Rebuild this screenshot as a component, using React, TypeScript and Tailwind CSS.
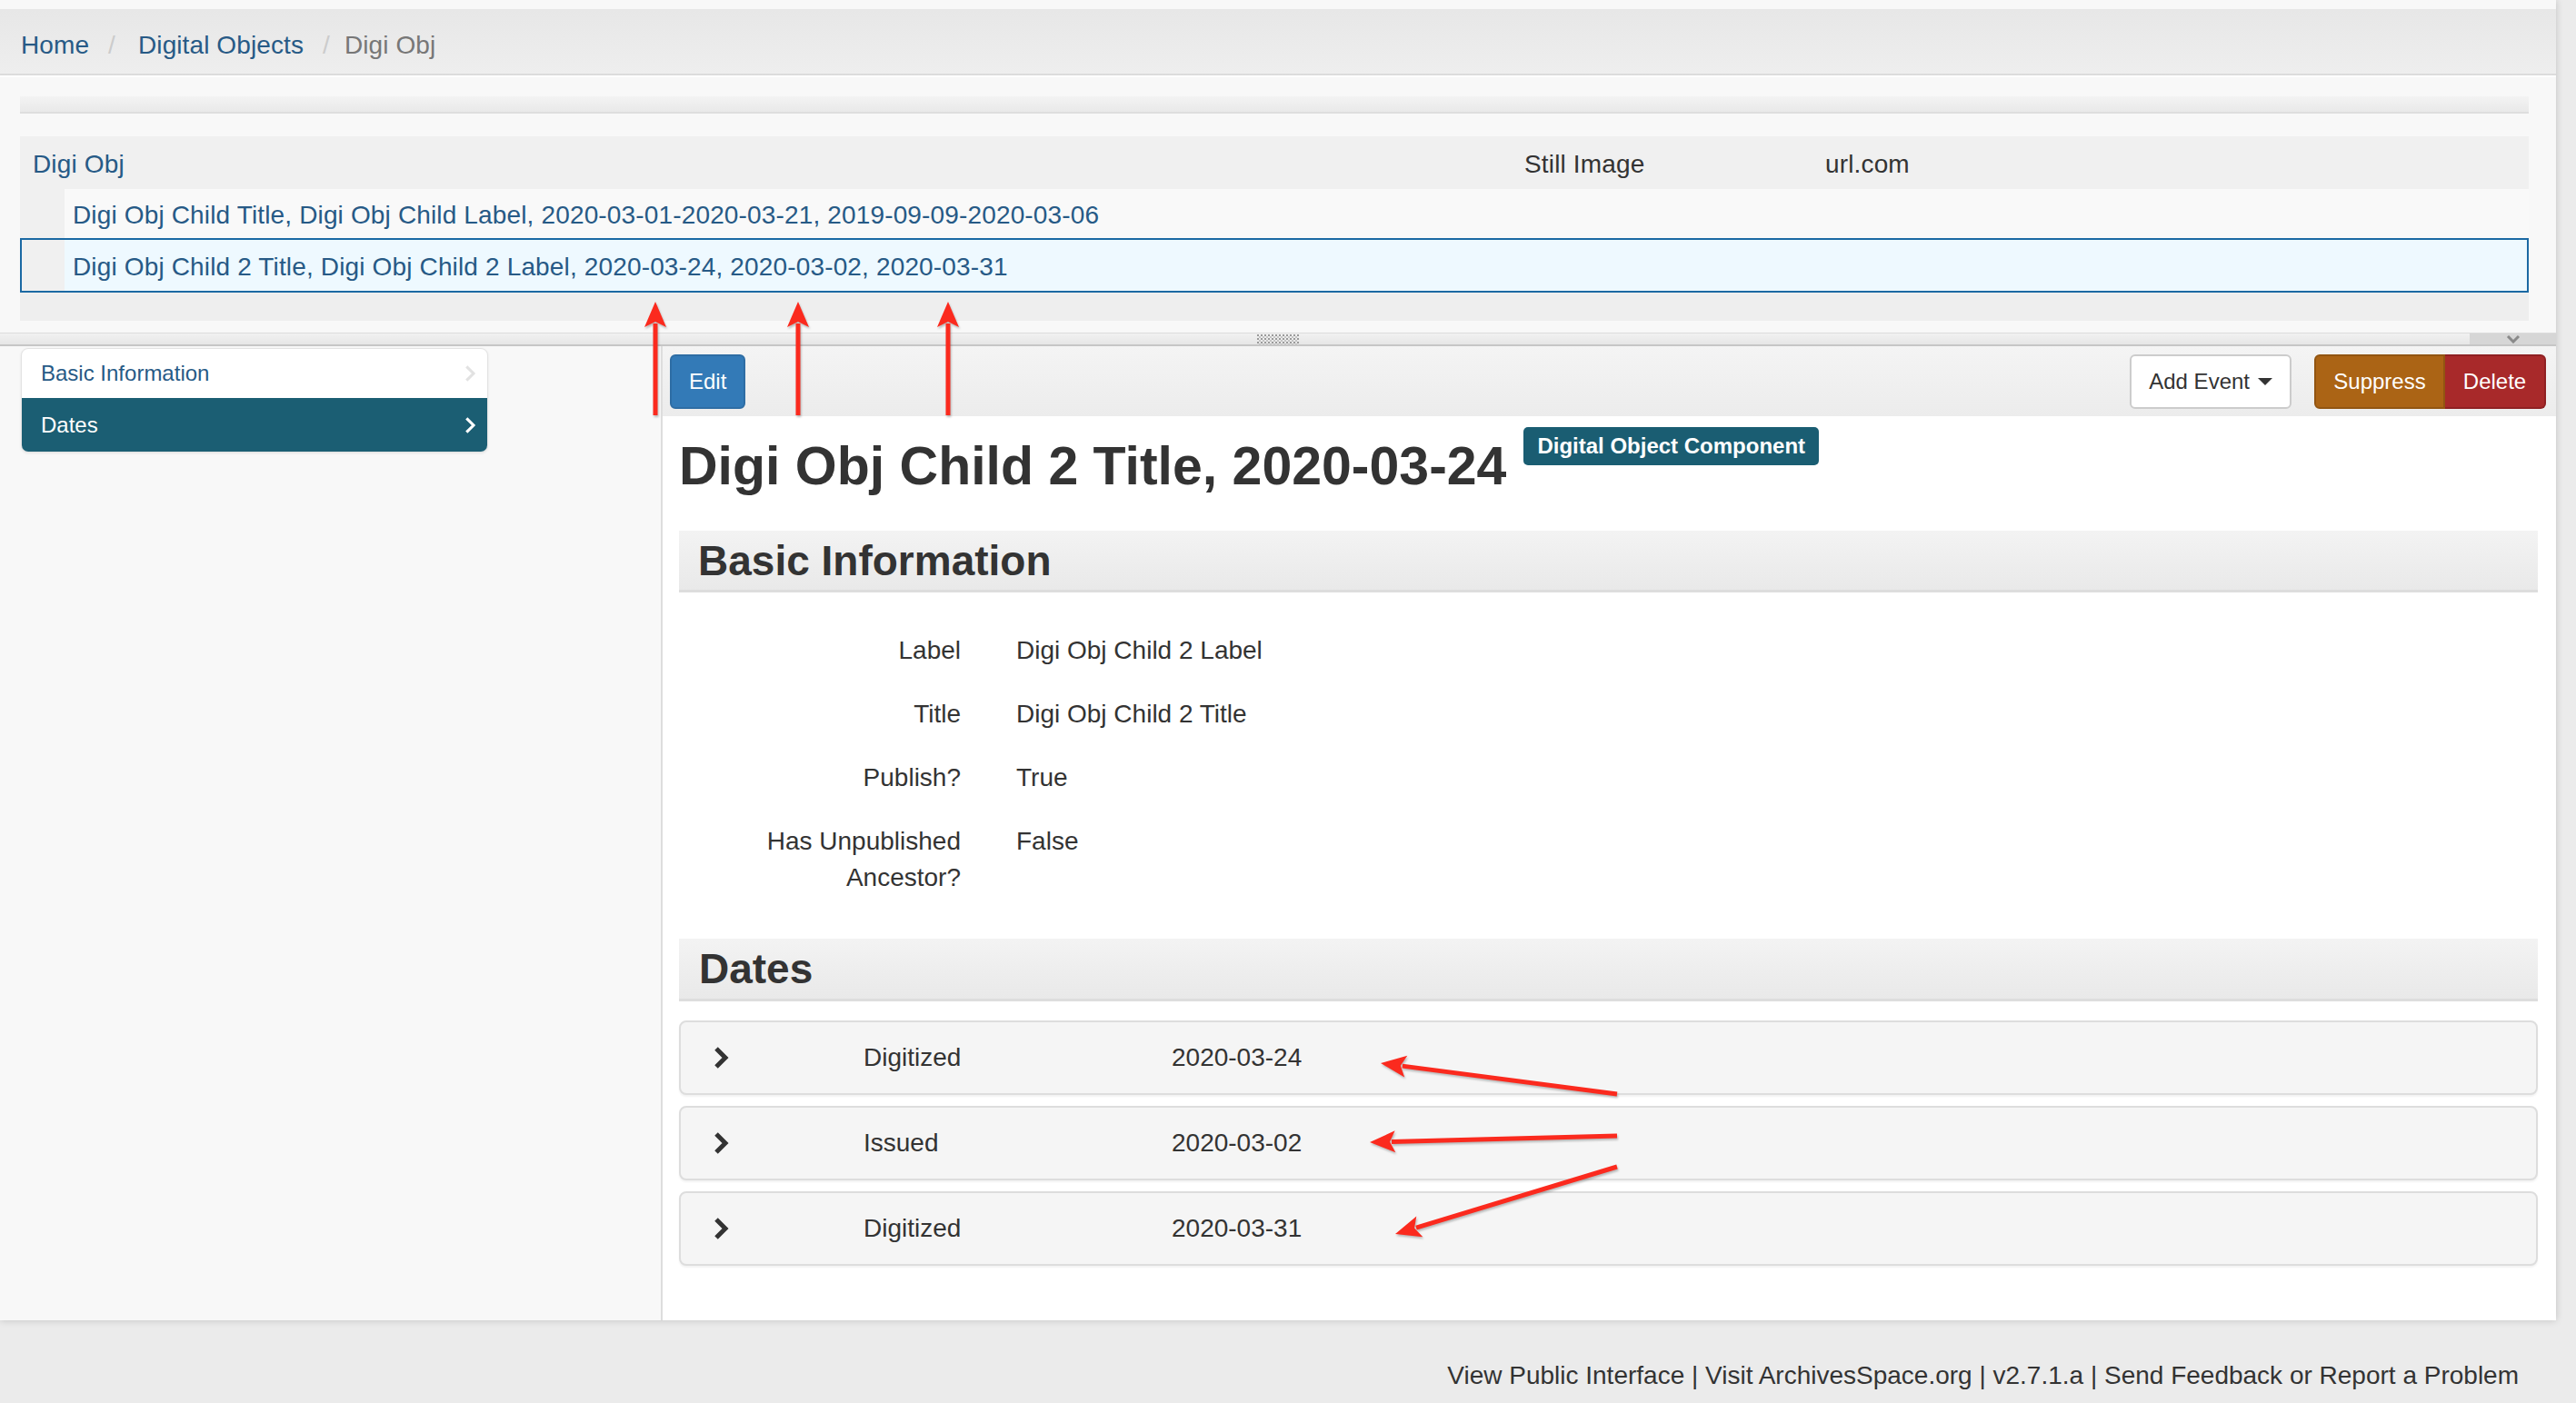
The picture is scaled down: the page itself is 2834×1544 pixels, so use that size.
import React from "react";

const LINK = "text-[#275a86]";

function Chevron({ className, stroke = 5 }: { className?: string; stroke?: number }) {
  return (
    <svg className={className} viewBox="0 0 19 26" fill="none" aria-hidden>
      <polyline
        points="4,3 14,13 4,23"
        stroke="currentColor"
        strokeWidth={stroke}
        strokeLinecap="butt"
        strokeLinejoin="miter"
      />
    </svg>
  );
}

function Arrow({ x1, y1, x2, y2 }: { x1: number; y1: number; x2: number; y2: number }) {
  const len = Math.hypot(x2 - x1, y2 - y1);
  const ux = (x2 - x1) / len;
  const uy = (y2 - y1) / len;
  const nx = -uy;
  const ny = ux;
  const head = 28;
  const half = 12;
  const bx = x2 - ux * head;
  const by = y2 - uy * head;
  const pts = [
    `${x2},${y2}`,
    `${bx + nx * half},${by + ny * half}`,
    `${bx + ux * 6},${by + uy * 6}`,
    `${bx - nx * half},${by - ny * half}`,
  ].join(" ");
  return (
    <g>
      <line x1={x1} y1={y1} x2={bx + ux * 4} y2={by + uy * 4} stroke="#fb2a1e" strokeWidth={5} />
      <polygon points={pts} fill="#fb2a1e" />
    </g>
  );
}

const fields: { label: string; value: string }[] = [
  { label: "Label", value: "Digi Obj Child 2 Label" },
  { label: "Title", value: "Digi Obj Child 2 Title" },
  { label: "Publish?", value: "True" },
  { label: "Has Unpublished Ancestor?", value: "False" },
];

const dates = [
  { type: "Digitized", date: "2020-03-24" },
  { type: "Issued", date: "2020-03-02" },
  { type: "Digitized", date: "2020-03-31" },
];

export default function App() {
  return (
    <div className="relative min-h-[1544px] w-full bg-[#ebebeb] font-['Liberation_Sans',Arial,sans-serif] text-[28px] leading-[40px] text-[#333]">
      <div className="w-[2812px] bg-[#f8f8f8] shadow-[0_0_8px_rgba(0,0,0,0.18)]">
        <div className="h-[10px]" />
        <nav className="flex h-[73px] items-start border-b-2 border-[#dcdcdc] bg-gradient-to-b from-[#e7e7e7] to-[#eeeeee] pl-[23px] pt-[20px] tracking-[0.1px]">
          <span className={LINK}>Home</span>
          <span className="ml-[21px] text-[#cccccc]">/</span>
          <span className={`ml-[25px] ${LINK}`}>Digital Objects</span>
          <span className="ml-[21px] text-[#cccccc]">/</span>
          <span className="ml-[16px] text-[#777777]">Digi Obj</span>
        </nav>

        {/* tree */}
        <div className="border-t-2 border-white pl-[22px] pr-[30px] pt-[21px] tracking-[0.15px]">
          <div className="h-[19px] border-b-2 border-[#dedede] bg-gradient-to-b from-[#f3f3f3] to-[#e9e9e9]" />
          <div className="mt-[25px] bg-[#eeeeee]">
            <div className="flex h-[58px] items-center bg-[#f0f0f0] pl-[14px] pt-[4px]">
              <span className={`w-[1641px] ${LINK}`}>Digi Obj</span>
              <span className="w-[331px]">Still Image</span>
              <span>url.com</span>
            </div>
            <div className="flex h-[54px]">
              <div className="w-[49px] bg-[#f0f0f0]" />
              <div className={`flex flex-1 items-center bg-[#f9f9f9] pl-[9px] pt-[4px] ${LINK}`}>
                Digi Obj Child Title, Digi Obj Child Label, 2020-03-01-2020-03-21, 2019-09-09-2020-03-06
              </div>
            </div>
            <div className="flex h-[60px] border-2 border-[#1b69a3]">
              <div className="w-[47px] bg-[#f0f0f0]" />
              <div className={`flex flex-1 items-center bg-[#eef9ff] pl-[9px] pt-[3px] ${LINK}`}>
                Digi Obj Child 2 Title, Digi Obj Child 2 Label, 2020-03-24, 2020-03-02, 2020-03-31
              </div>
            </div>
            <div className="h-[31px]" />
          </div>
        </div>

        {/* splitter */}
        <div className="mt-[13px] grid h-[15px] grid-cols-[1fr_auto_1fr] border-b-2 border-t border-b-[#c6c6c6] border-t-[#dcdcdc] bg-gradient-to-b from-[#f1f1f1] to-[#e6e6e6]">
          <div />
          <div className="flex items-center">
            <svg width="46" height="11" aria-hidden>
              <defs>
                <pattern id="grip" width="4" height="4" patternUnits="userSpaceOnUse">
                  <rect width="2" height="2" fill="#9a9a9a" />
                  <rect x="2" y="2" width="2" height="2" fill="#c4c4c4" />
                </pattern>
              </defs>
              <rect width="46" height="11" fill="url(#grip)" />
            </svg>
          </div>
          <div className="flex justify-end">
            <div className="flex h-full w-[95px] items-start justify-center bg-[#d6d6d6] pt-[1px]">
              <svg width="16" height="10" viewBox="0 0 16 10" aria-hidden>
                <polyline points="2,2 8,8 14,2" fill="none" stroke="#8a8a8a" strokeWidth={3} />
              </svg>
            </div>
          </div>
        </div>

        <div className="flex">
          {/* sidebar */}
          <aside className="w-[727px] pl-[23px] pt-[2px]">
            <div className="w-[514px] overflow-hidden rounded-[8px] border border-[#e3e3e3] bg-white text-[24px] shadow-[0_1px_3px_rgba(0,0,0,0.08)]">
              <div className={`flex h-[54px] items-center justify-between pl-[21px] pr-[11px] ${LINK}`}>
                <span>Basic Information</span>
                <Chevron className="h-[20px] w-[15px] text-[#e2e2e2]" stroke={4} />
              </div>
              <div className="flex h-[59px] items-center justify-between bg-[#1b5e73] pl-[21px] pr-[11px] text-white">
                <span>Dates</span>
                <Chevron className="h-[20px] w-[15px] text-white" stroke={4} />
              </div>
            </div>
          </aside>

          {/* main record */}
          <section className="flex-1 border-l-2 border-[#dddddd] bg-white pb-[60px]">
            <div className="flex h-[77px] items-center justify-between bg-gradient-to-b from-[#f4f4f4] to-[#ececec] pl-[8px] pr-[11px] text-[24px]">
              <button className="h-[60px] rounded-[6px] border-2 border-[#2e6da4] bg-[#337ab7] px-[19px] text-white">
                Edit
              </button>
              <div className="flex items-center gap-[25px]">
                <button className="flex h-[60px] items-center gap-[9px] rounded-[6px] border-2 border-[#cccccc] bg-white px-[19px] text-[#333]">
                  Add Event
                  <span className="h-0 w-0 border-x-[8px] border-t-[8px] border-x-transparent border-t-[#333]" />
                </button>
                <div className="flex">
                  <button className="h-[60px] w-[144px] rounded-l-[6px] border-2 border-[#925511] bg-[#ab6415] text-white">
                    Suppress
                  </button>
                  <button className="h-[60px] w-[111px] rounded-r-[6px] border-2 border-l-0 border-[#8f2022] bg-[#a8292a] text-white">
                    Delete
                  </button>
                </div>
              </div>
            </div>

            <div className="pl-[18px] pr-[20px]">
              <div className="mt-[12px] flex items-start">
                <h2 className="mt-[11px] text-[59px] font-bold leading-[65px] text-[#333]">
                  Digi Obj Child 2 Title, 2020-03-24
                </h2>
                <span className="ml-[19px] flex h-[42px] items-center rounded-[5px] bg-[#1a5d72] px-[15px] text-[24px] font-bold text-white">
                  Digital Object Component
                </span>
              </div>

              <div className="mt-[38px] flex h-[68px] items-center border-b-[3px] border-[#dddddd] bg-gradient-to-b from-[#f3f3f3] to-[#e9e9e9] pl-[21px]">
                <h3 className="text-[46px] font-bold leading-[56px]">Basic Information</h3>
              </div>

              <div className="flex flex-col gap-[30px] pt-[44px]">
                {fields.map((f) => (
                  <div key={f.label} className="flex">
                    <div className="w-[340px] pl-[31px] pr-[30px] text-right">{f.label}</div>
                    <div className="pl-[31px]">{f.value}</div>
                  </div>
                ))}
              </div>

              <div className="mt-[47px] flex h-[69px] items-center border-b-[3px] border-[#dddddd] bg-gradient-to-b from-[#f3f3f3] to-[#e9e9e9] pl-[22px]">
                <h3 className="text-[46px] font-bold leading-[56px]">Dates</h3>
              </div>

              <div className="mt-[21px] flex flex-col gap-[12px]">
                {dates.map((d, i) => (
                  <div
                    key={i}
                    className="flex h-[82px] items-center rounded-[8px] border-2 border-[#dddddd] bg-[#f5f5f5] pl-[35px] shadow-[0_2px_2px_rgba(0,0,0,0.05)]"
                  >
                    <Chevron className="h-[26px] w-[19px] text-[#333]" stroke={5} />
                    <span className="ml-[147px] w-[339px]">{d.type}</span>
                    <span>{d.date}</span>
                  </div>
                ))}
              </div>
            </div>
          </section>
        </div>
      </div>

      <footer className="h-[91px] pr-[63px] pt-[41px] text-right">
        View Public Interface | Visit ArchivesSpace.org | v2.7.1.a | Send Feedback or Report a Problem
      </footer>

      <svg
        className="pointer-events-none absolute left-0 top-0 drop-shadow-[1px_2px_1px_rgba(0,0,0,0.25)]"
        width="2834"
        height="1544"
        viewBox="0 0 2834 1544"
        aria-hidden
      >
        <Arrow x1={721} y1={457} x2={721} y2={332} />
        <Arrow x1={878} y1={457} x2={878} y2={332} />
        <Arrow x1={1043} y1={457} x2={1043} y2={332} />
        <Arrow x1={1779} y1={1204} x2={1519} y2={1170} />
        <Arrow x1={1779} y1={1250} x2={1507} y2={1257} />
        <Arrow x1={1779} y1={1284} x2={1535} y2={1358} />
      </svg>
    </div>
  );
}
